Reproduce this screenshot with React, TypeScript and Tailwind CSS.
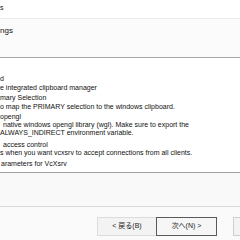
import React from "react";

const font = { fontFamily: '"Liberation Sans", Arial, "Noto Sans CJK JP", sans-serif' };

export default function App() {
  return (
    <div
      className="w-[240px] h-[240px] overflow-hidden bg-white text-[#111] flex flex-col"
      style={font}
    >
      {/* Header */}
      <div className="h-[19px] shrink-0 bg-white text-[7px] leading-[8px] pt-[4px] border-b border-[#ececec]">
        <div>s</div>
      </div>
      <div className="h-[39px] shrink-0 bg-[#fbfbfb] border-b border-[#a8a8a8] text-[8px] leading-[9px] pt-[7px]">
        <div>ngs</div>
      </div>

      {/* Content */}
      <div className="flex flex-col shrink-0 text-[7px] leading-[8px] pt-[17px] bg-white h-[114px]">
        <div>d</div>
        <div className="mt-[1px]">e integrated clipboard manager</div>
        <div className="mt-[2px]">mary Selection</div>
        <div className="mt-[1px]">o map the PRIMARY selection to the windows clipboard.</div>
        <div className="mt-[2px]">opengl</div>
        <div className="pl-[3px]">native windows opengl library (wgl). Make sure to export the</div>
        <div>ALWAYS_INDIRECT environment variable.</div>
        <div className="mt-[4px] pl-[3px]">access control</div>
        <div>s when you want vcxsrv to accept connections from all clients.</div>
        <div className="mt-[3px] pl-[1px]">arameters for VcXsrv</div>
      </div>

      {/* textbox area */}
      <div className="h-[35px] shrink-0 bg-[#f9f9f9] border-t border-[#a0a0a0] border-b border-b-[#dadada]" />

      {/* Buttons */}
      <div
        className="flex-1 bg-[#fafafa] flex items-start pt-[10px] pl-[97px] text-[7px]"
        style={{ fontFamily: '"Liberation Sans", "Noto Sans CJK JP", sans-serif' }}
      >
        <button className="shrink-0 w-[60px] h-[19px] bg-[#f3f3f3] border border-[#dcdcdc] flex items-center justify-center text-[#222]">
          &lt; 戻る(B)
        </button>
        <button className="shrink-0 ml-[-1px] w-[61px] h-[19px] bg-[#f6f6f6] border border-[#5a5a5a] flex items-center justify-center text-[#222]">
          次へ(N) &gt;
        </button>
        <button className="shrink-0 ml-[16px] w-[61px] h-[19px] bg-[#f3f3f3] border border-[#cfcfcf] flex items-center justify-center text-[#222]">
          キャンセル
        </button>
      </div>
    </div>
  );
}
